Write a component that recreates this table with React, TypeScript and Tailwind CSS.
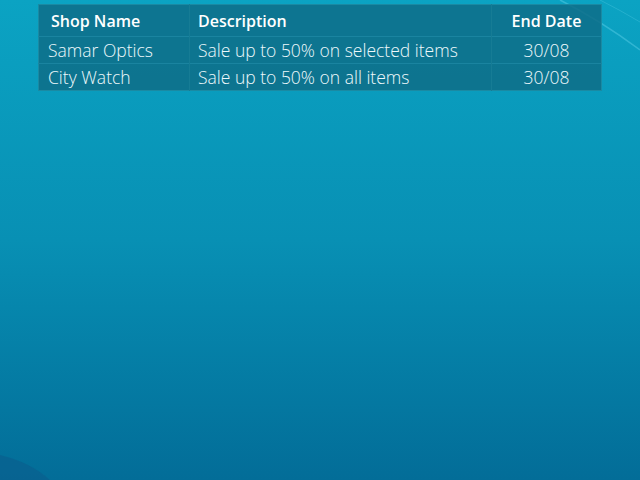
const rows = [
  { shop: 'Samar Optics', desc: 'Sale up to 50% on selected items', end: '30/08' },
  { shop: 'City Watch', desc: 'Sale up to 50% on all items', end: '30/08' },
]

export default function App() {
  return (
    <div
      className="relative w-[640px] h-[480px] overflow-hidden bg-gradient-to-b from-[#0ba3c3] via-[#0890b4] to-[#036d98]"
      style={{ fontFamily: '"Open Sans", Inter, sans-serif' }}
    >
      {/* background swooshes */}
      <svg className="absolute inset-0" width="640" height="480" viewBox="0 0 640 480">
        <path d="M560 0 Q600 20 640 50" stroke="#5fd0e8" strokeOpacity="0.45" strokeWidth="1.5" fill="none" />
        <path d="M600 0 Q620 10 640 22" stroke="#5fd0e8" strokeOpacity="0.3" strokeWidth="1" fill="none" />
        <path d="M0 455 Q30 462 50 480 L0 480 Z" fill="#0a5f8e" fillOpacity="0.7" />
      </svg>

      <div className="relative pt-1 px-[38px]">
        <table className="w-[564px] border-collapse bg-[#0e6d88]/85 text-white border border-[#1a8aa3]">
          <thead>
            <tr className="h-[32px]">
              <th className="w-[151px] text-left pl-3 font-semibold text-[16px]">Shop Name</th>
              <th className="w-[302px] text-left pl-2 font-semibold text-[16px] border-l border-[#167c95]">Description</th>
              <th className="text-center font-semibold text-[16px] border-l border-[#167c95]">End Date</th>
            </tr>
          </thead>
          <tbody>
            {rows.map((r) => (
              <tr key={r.shop} className="h-[27px] border-t border-[#1a84a0] bg-[#10758f]/40 text-[17.5px] leading-[26px]">
                <td className="pl-[9px] font-light text-[#eef9fc]">{r.shop}</td>
                <td className="pl-2 font-light text-[#eef9fc] border-l border-[#167c95]">{r.desc}</td>
                <td className="text-center font-light text-[#eef9fc] border-l border-[#167c95]">{r.end}</td>
              </tr>
            ))}
          </tbody>
        </table>
      </div>
    </div>
  )
}
